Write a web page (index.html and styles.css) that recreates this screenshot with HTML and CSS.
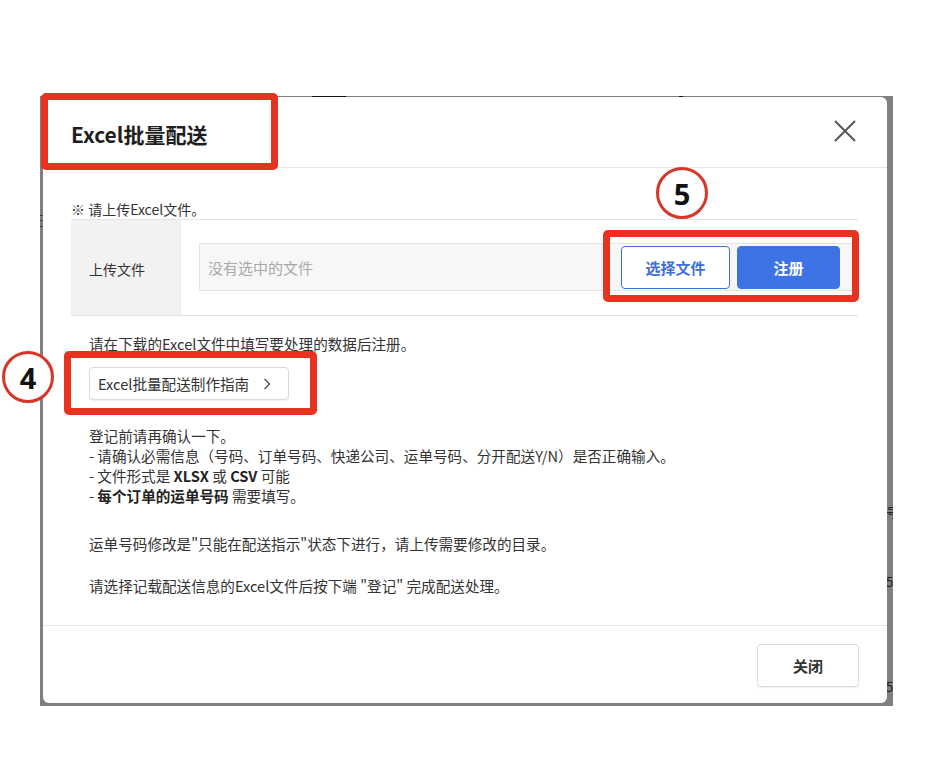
FILE: index.html
```html
<!DOCTYPE html>
<html lang="zh-CN">
<head>
<meta charset="utf-8">
<title>Excel批量配送</title>
<link rel="stylesheet" href="styles.css">
</head>
<body>
<div class="backdrop">
  <span class="bg-glyph g1">号</span>
  <span class="bg-glyph g2">5</span>
  <span class="bg-glyph g3">5</span>
  <span class="bg-glyph g4">已</span>
  <span class="bg-dash d1"></span>
  <span class="bg-dash d2"></span>
  <div class="modal">
    <div class="modal-header">
      <h1 class="modal-title">Excel批量配送</h1>
      <button class="close-btn" aria-label="close">
        <svg width="22" height="22" viewBox="0 0 22 22"><path d="M1 1 L21 21 M21 1 L1 21" stroke="#555" stroke-width="2" fill="none"/></svg>
      </button>
    </div>
    <div class="modal-body">
      <p class="note">※ 请上传Excel文件。</p>
      <div class="upload-table">
        <div class="label-cell">上传文件</div>
        <div class="value-cell">
          <div class="file-box">
            <span class="placeholder">没有选中的文件</span>
            <button class="btn btn-outline">选择文件</button>
            <button class="btn btn-primary">注册</button>
          </div>
        </div>
      </div>
      <div class="guide">
        <p class="line">请在下载的Excel文件中填写要处理的数据后注册。</p>
        <button class="guide-btn">Excel批量配送制作指南<svg class="chev" width="8" height="12" viewBox="0 0 8 12"><path d="M1.5 1 L6.5 6 L1.5 11" stroke="#555" stroke-width="1.4" fill="none"/></svg></button>
        <div class="para first">
          <p class="line">登记前请再确认一下。</p>
          <p class="line">- 请确认必需信息（号码、订单号码、快递公司、运单号码、分开配送Y/N）是否正确输入。</p>
          <p class="line">- 文件形式是 <b>XLSX</b> 或 <b>CSV</b> 可能</p>
          <p class="line">- <b>每个订单的运单号码</b> 需要填写。</p>
        </div>
        <p class="line para second">运单号码修改是"只能在配送指示"状态下进行，请上传需要修改的目录。</p>
        <p class="line para third">请选择记载配送信息的Excel文件后按下端 "登记" 完成配送处理。</p>
      </div>
    </div>
    <div class="modal-footer">
      <button class="btn btn-close">关闭</button>
    </div>
  </div>
</div>

<div class="mark box1"></div>
<div class="mark box5"></div>
<div class="mark box4"></div>
<div class="num num5">5</div>
<div class="num num4">4</div>
</body>
</html>
```

FILE: styles.css
```css
* { box-sizing: border-box; }
html, body {
  margin: 0;
  padding: 0;
  background: #ffffff;
  font-family: "Noto Sans CJK SC", "Noto Sans", sans-serif;
  color: #333;
}
body {
  width: 926px;
  height: 774px;
  position: relative;
  overflow: hidden;
}
p { margin: 0; }
button { font-family: inherit; cursor: pointer; }

.backdrop {
  position: relative;
  z-index: 0;
  margin: 96px 0 0 40px;
  width: 853px;
  height: 610px;
  background: #7f7f7f;
  padding: 1px 6px 3px 3px;
  overflow: hidden;
}
.bg-glyph {
  position: absolute;
  font-size: 13px;
  color: #222;
  line-height: 1;
}
.g1 { left: 846px; top: 409px; }
.g2 { left: 846px; top: 479px; }
.g3 { left: 846px; top: 584px; }
.g4 { left: -4px; top: 117px; color: #3a3a6a; }
.bg-dash {
  position: absolute;
  top: 0;
  height: 2px;
  background: #111;
}
.d1 { left: 272px; width: 34px; }
.d2 { left: 639px; width: 4px; }

.modal {
  position: relative;
  z-index: 1;
  width: 100%;
  height: 100%;
  background: #fff;
  border-radius: 6px;
  display: flex;
  flex-direction: column;
}

.modal-header {
  height: 71px;
  border-bottom: 1px solid #e6e6e6;
  display: flex;
  align-items: center;
  justify-content: space-between;
  padding: 4px 31px 0 28px;
}
.modal-title {
  margin: 0;
  font-size: 21px;
  font-weight: 700;
  color: #1e1e1e;
  line-height: 28px;
}
.close-btn {
  border: none;
  background: none;
  padding: 0;
  width: 22px;
  height: 22px;
  margin-top: -6px;
  display: flex;
}

.modal-body {
  flex: 1;
  padding: 31px 29px 0 28px;
}
.note {
  font-size: 14px;
  line-height: 20px;
  color: #333;
}
.upload-table {
  display: flex;
  border-top: 1px solid #e4e4e4;
  border-bottom: 1px solid #e4e4e4;
  height: 97px;
}
.label-cell {
  width: 110px;
  background: #f2f2f2;
  display: flex;
  align-items: center;
  padding: 2px 0 0 18px;
  font-size: 14px;
  color: #333;
}
.value-cell {
  flex: 1;
  display: flex;
  align-items: center;
  padding-left: 18px;
  padding-bottom: 1px;
}
.file-box {
  flex: 1;
  height: 48px;
  background: #f7f7f7;
  border: 1px solid #e3e3e3;
  display: flex;
  align-items: center;
  padding: 1px 17px 0 8px;
}
.placeholder {
  flex: 1;
  font-size: 15px;
  color: #a8a8a8;
}
.btn {
  height: 43px;
  border-radius: 4px;
  font-size: 15px;
  font-weight: 700;
}
.btn-outline {
  width: 109px;
  background: #fff;
  border: 1px solid #3d6fd9;
  color: #3d6fd9;
}
.btn-primary {
  width: 103px;
  margin-left: 7px;
  background: #3e73e6;
  border: 1px solid #3e73e6;
  color: #fff;
}

.guide {
  padding-left: 18px;
}
.line {
  font-size: 14.6px;
  line-height: 20px;
  color: #333;
  white-space: nowrap;
}
.guide > .line:first-child { margin-top: 18px; }
.guide-btn {
  margin-top: 13px;
  width: 200px;
  height: 33px;
  background: #fff;
  border: 1px solid #d9d9d9;
  border-radius: 4px;
  font-size: 14.6px;
  color: #333;
  padding: 0 0 0 8px;
  display: flex;
  align-items: center;
  box-shadow: 0 1px 1px rgba(0,0,0,0.06);
}
.chev {
  margin-left: 14px;
}
.para.first { margin-top: 26px; }
.para.second { margin-top: 28px; }
.para.third { margin-top: 22px; }
.line b { font-weight: 700; color: #222; }

.modal-footer {
  border-top: 1px solid #e6e6e6;
  padding: 18px 28px 16px;
  display: flex;
  justify-content: flex-end;
}
.btn-close {
  width: 102px;
  background: #fff;
  border: 1px solid #dcdcdc;
  color: #333;
  font-weight: 700;
  box-shadow: 0 1px 1px rgba(0,0,0,0.06);
}

/* annotations */
.mark {
  position: absolute;
  z-index: 10;
  border: 7px solid #e6321e;
  border-radius: 5px;
}
.box1 { left: 41px; top: 93px; width: 237px; height: 77px; }
.box5 { left: 603px; top: 230px; width: 256px; height: 72px; }
.box4 { left: 64px; top: 351px; width: 253px; height: 64px; }
.num {
  position: absolute;
  z-index: 11;
  width: 52px;
  height: 52px;
  border: 3px solid #d8362b;
  border-radius: 50%;
  background: #fff;
  display: flex;
  align-items: center;
  justify-content: center;
  font-family: "Open Sans", "Noto Sans", sans-serif;
  font-weight: 700;
  font-size: 29px;
  color: #111;
  line-height: 1;
}
.num5 { left: 656px; top: 167px; }
.num4 { left: 2px; top: 351px; }
```
